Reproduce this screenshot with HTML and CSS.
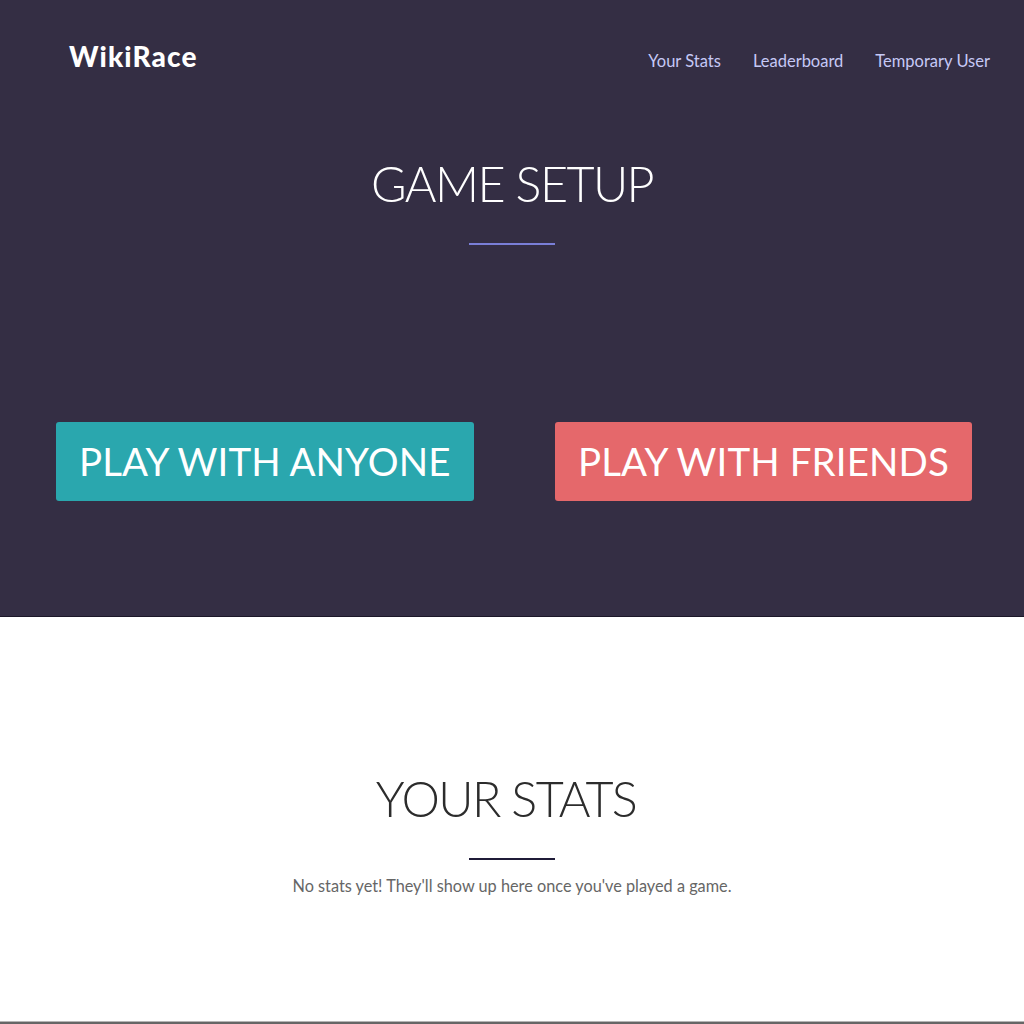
FILE: index.html
```html
<!DOCTYPE html>
<html>
<head>
<meta charset="utf-8">
<title>WikiRace</title>
<link rel="stylesheet" href="styles.css">
</head>
<body>
<section class="hero">
  <header class="topbar">
    <a class="brand" href="#">WikiRace</a>
    <nav class="nav">
      <a href="#">Your Stats</a>
      <a href="#">Leaderboard</a>
      <a href="#">Temporary User</a>
    </nav>
  </header>
  <h1 class="title light">GAME SETUP</h1>
  <hr class="rule rule-light">
  <div class="buttons">
    <div class="col"><a class="btn btn-teal" href="#">PLAY WITH ANYONE</a></div>
    <div class="col"><a class="btn btn-red" href="#">PLAY WITH FRIENDS</a></div>
  </div>
</section>
<section class="stats">
  <h2 class="title dark">YOUR STATS</h2>
  <hr class="rule rule-dark">
  <p class="note">No stats yet! They'll show up here once you've played a game.</p>
</section>
<footer class="footer"></footer>
</body>
</html>
```
FILE: styles.css
```css
html, body {
  margin: 0;
  padding: 0;
  background: #ffffff;
  font-family: Lato, "Open Sans", "Liberation Sans", sans-serif;
}
a { text-decoration: none; }

.hero {
  background: #342e44;
  height: 616px;
  border-bottom: 1px solid #1c1829;
  box-sizing: content-box;
}

.topbar {
  display: flex;
  justify-content: space-between;
  align-items: baseline;
  padding: 38px 34px 0 69px;
  height: 36px;
}
.brand {
  color: #ffffff;
  font-weight: 900;
  font-size: 28px;
  line-height: 36px;
  letter-spacing: 1.1px;
}
.nav {
  display: flex;
  gap: 32px;
}
.nav a {
  color: #c6c9f6;
  font-size: 16.5px;
  line-height: 36px;
}

.title {
  margin: 0;
  text-align: center;
  font-weight: 300;
  font-size: 48.5px;
  line-height: 59px;
  letter-spacing: -1.6px;
}
.title.light { color: #ffffff; margin-top: 80px; }
.title.dark { color: #2c2c2c; padding-right: 12px; }

.rule {
  width: 86px;
  height: 2px;
  border: 0;
  margin: 30px auto 0;
}
.rule-light { background: #7a7fd8; }
.rule-dark { background: #1f1b38; }

.buttons {
  display: grid;
  grid-template-columns: 499px 499px;
  padding-left: 56px;
  margin-top: 177px;
}
.btn {
  display: inline-block;
  height: 79px;
  line-height: 79px;
  padding: 0 23px;
  border-radius: 3px;
  color: #ffffff;
  font-size: 38.5px;
  letter-spacing: 0.1px;
}
.btn-teal { background: #2aa7ae; }
.btn-red { background: #e5686b; }

.stats {
  padding-top: 152px;
  height: 252px;
}
.note {
  margin: 14px 0 0;
  text-align: center;
  color: #666666;
  font-size: 16.3px;
  line-height: 24px;
}

.footer {
  border-top: 1px solid #b5b5b5;
  background: #666666;
  height: 2px;
}
```
